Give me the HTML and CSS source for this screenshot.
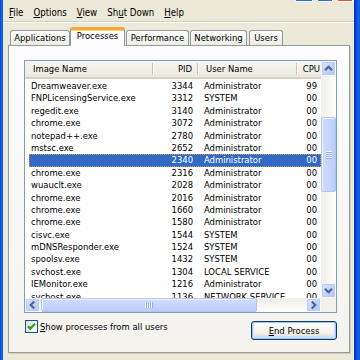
FILE: index.html
```html
<!DOCTYPE html>
<html>
<head>
<meta charset="utf-8">
<link rel="stylesheet" href="styles.css">
</head>
<body>
<div class="window">
  <div class="edge-l"></div>
  <div class="client">
    <div class="titlebar">
      <span class="tb-btn w18"></span>
      <span class="tb-btn w16"></span>
      <span class="tb-btn w16 red"></span>
    </div>
    <div class="menubar">
      <span><u>F</u>ile</span>
      <span><u>O</u>ptions</span>
      <span><u>V</u>iew</span>
      <span>Sh<u>u</u>t Down</span>
      <span><u>H</u>elp</span>
    </div>
    <div class="tabs">
      <div class="tab t-app">Applications</div>
      <div class="tab sel t-proc">Processes</div>
      <div class="tab t-perf">Performance</div>
      <div class="tab t-net">Networking</div>
      <div class="tab t-users">Users</div>
    </div>
    <div class="panel">
      <div class="listbox">
        <div class="lv-content">
          <div class="lv-head">
            <div class="hc h-name">Image Name</div>
            <div class="hc h-pid">PID</div>
            <div class="hc h-user">User Name</div>
            <div class="hc h-cpu">CPU</div>
          </div>
          <div class="lv-rows">
            <div class="row"><span class="c-name">Dreamweaver.exe</span><span class="c-pid">3344</span><span class="c-user">Administrator</span><span class="c-cpu">99</span></div>
            <div class="row"><span class="c-name">FNPLicensingService.exe</span><span class="c-pid">3312</span><span class="c-user">SYSTEM</span><span class="c-cpu">00</span></div>
            <div class="row"><span class="c-name">regedit.exe</span><span class="c-pid">3140</span><span class="c-user">Administrator</span><span class="c-cpu">00</span></div>
            <div class="row"><span class="c-name">chrome.exe</span><span class="c-pid">3072</span><span class="c-user">Administrator</span><span class="c-cpu">00</span></div>
            <div class="row"><span class="c-name">notepad++.exe</span><span class="c-pid">2780</span><span class="c-user">Administrator</span><span class="c-cpu">00</span></div>
            <div class="row"><span class="c-name">mstsc.exe</span><span class="c-pid">2652</span><span class="c-user">Administrator</span><span class="c-cpu">00</span></div>
            <div class="row selected"><span class="c-name"></span><span class="c-pid">2340</span><span class="c-user">Administrator</span><span class="c-cpu">00</span></div>
            <div class="row"><span class="c-name">chrome.exe</span><span class="c-pid">2316</span><span class="c-user">Administrator</span><span class="c-cpu">00</span></div>
            <div class="row"><span class="c-name">wuauclt.exe</span><span class="c-pid">2028</span><span class="c-user">Administrator</span><span class="c-cpu">00</span></div>
            <div class="row"><span class="c-name">chrome.exe</span><span class="c-pid">2016</span><span class="c-user">Administrator</span><span class="c-cpu">00</span></div>
            <div class="row"><span class="c-name">chrome.exe</span><span class="c-pid">1660</span><span class="c-user">Administrator</span><span class="c-cpu">00</span></div>
            <div class="row"><span class="c-name">chrome.exe</span><span class="c-pid">1580</span><span class="c-user">Administrator</span><span class="c-cpu">00</span></div>
            <div class="row"><span class="c-name">cisvc.exe</span><span class="c-pid">1544</span><span class="c-user">SYSTEM</span><span class="c-cpu">00</span></div>
            <div class="row"><span class="c-name">mDNSResponder.exe</span><span class="c-pid">1524</span><span class="c-user">SYSTEM</span><span class="c-cpu">00</span></div>
            <div class="row"><span class="c-name">spoolsv.exe</span><span class="c-pid">1432</span><span class="c-user">SYSTEM</span><span class="c-cpu">00</span></div>
            <div class="row"><span class="c-name">svchost.exe</span><span class="c-pid">1304</span><span class="c-user">LOCAL SERVICE</span><span class="c-cpu">00</span></div>
            <div class="row"><span class="c-name">IEMonitor.exe</span><span class="c-pid">1216</span><span class="c-user">Administrator</span><span class="c-cpu">00</span></div>
            <div class="row"><span class="c-name">svchost.exe</span><span class="c-pid">1136</span><span class="c-user">NETWORK SERVICE</span><span class="c-cpu">00</span></div>
          </div>
        </div>
        <div class="vscroll">
          <div class="sb-btn"><svg width="15" height="15" viewBox="0 0 15 15"><path d="M4 9.2 L7.5 5.7 L11 9.2" fill="none" stroke="#4d6185" stroke-width="2"/></svg></div>
          <div class="vthumb"><span class="vgrip"></span></div>
          <div class="sb-btn down"><svg width="15" height="15" viewBox="0 0 15 15"><path d="M4 5.8 L7.5 9.3 L11 5.8" fill="none" stroke="#4d6185" stroke-width="2"/></svg></div>
        </div>
        <div class="hscroll">
          <div class="sb-btn h"><svg width="15" height="14" viewBox="0 0 15 14"><path d="M9.2 3.5 L5.7 7 L9.2 10.5" fill="none" stroke="#4d6185" stroke-width="2"/></svg></div>
          <div class="hthumb"><span class="hgrip"></span></div>
          <div class="sb-btn h right"><svg width="15" height="14" viewBox="0 0 15 14"><path d="M5.8 3.5 L9.3 7 L5.8 10.5" fill="none" stroke="#4d6185" stroke-width="2"/></svg></div>
        </div>
        <div class="corner"></div>
      </div>
      <div class="footer">
        <label class="check">
          <span class="box"><svg width="11" height="11" viewBox="0 0 11 11"><path d="M2 5.2 L4.3 7.6 L9 2.8" fill="none" stroke="#21a121" stroke-width="2.2"/></svg></span>
          <span><u>S</u>how processes from all users</span>
        </label>
        <div class="button"><u>E</u>nd Process</div>
      </div>
    </div>
  </div>
  <div class="edge-r"></div>
</div>
</body>
</html>
```

FILE: styles.css
```css
html, body {
  margin: 0;
  padding: 0;
}
body {
  width: 360px;
  height: 360px;
  overflow: hidden;
  background: #ece9d8;
  font-family: "DejaVu Sans Condensed", "DejaVu Sans", sans-serif;
  font-stretch: condensed;
  font-size: 9.4px;
  color: #000;
}
.window {
  display: flex;
  height: 360px;
}
.edge-l {
  width: 3px;
  background: linear-gradient(90deg, #0a3fcf, #1b6af0 60%, #0c4fe2);
}
.edge-r {
  width: 6px;
  background: linear-gradient(90deg, #0a2fb8, #0c48db 40%, #1666ee 80%, #0d4fe0);
}
.client {
  flex: 1;
  display: flex;
  flex-direction: column;
}
.titlebar {
  height: 2px;
  display: flex;
  justify-content: flex-end;
  gap: 4px;
  padding-right: 1px;
}
.tb-btn {
  height: 2px;
  box-sizing: border-box;
  border: 1px solid #fff;
  border-top: 0;
  border-radius: 0 0 3px 3px;
  background: #2d6be3;
}
.tb-btn.w18 { width: 18px; }
.tb-btn.w16 { width: 16px; }
.tb-btn.red { background: #d95a33; }

.menubar {
  height: 20px;
  box-sizing: border-box;
  padding: 3px 0 0 6px;
  display: flex;
  gap: 10px;
  font-size: 9.6px;
  line-height: 16px;
  border-bottom: 1px solid #d3d0c2;
  box-shadow: 0 1px 0 #fff;
}
.menubar u, .check u, .button u { text-decoration-thickness: 1px; text-underline-offset: 1px; }

.tabs {
  margin: 5px 0 0 7px;
  height: 18px;
  display: flex;
  align-items: flex-end;
}
.tab {
  height: 15px;
  box-sizing: border-box;
  border: 1px solid #919b9c;
  border-bottom: 0;
  border-radius: 3px 3px 0 0;
  background: linear-gradient(#fefefe, #ecebe4);
  text-align: center;
  line-height: 14px;
  white-space: nowrap;
}
.tab.sel {
  height: 19px;
  margin-bottom: -1px;
  position: relative;
  z-index: 1;
  border-top: 3px solid #f0a83c;
  box-shadow: inset 0 1px 0 #ffd56a;
  background: #fcfcfe;
  line-height: 11px;
  padding-bottom: 5px;
}
.t-app { width: 60px; }
.t-proc { width: 55px; }
.t-perf { width: 63px; margin-left: 1px; }
.t-net { width: 57px; margin-left: 1px; }
.t-users { width: 34px; margin-left: 2px; }

.panel {
  margin-left: 5px;
  width: 342px;
  box-sizing: border-box;
  border: 1px solid #919b9c;
  box-shadow: 1px 1px 0 #d2cfc2;
  background: linear-gradient(#fcfcfe, #f4f3ee);
  padding: 14px 12px 12px 15px;
}

.listbox {
  width: 313px;
  height: 253px;
  box-sizing: border-box;
  border: 1px solid #7f9db9;
  background: #fff;
  display: grid;
  grid-template-columns: 296px 15px;
  grid-template-rows: 237px 14px;
}
.lv-content {
  overflow: hidden;
}
.lv-head {
  height: 18px;
  box-sizing: border-box;
  display: grid;
  grid-template-columns: 128px 45px 99px 24px;
  align-items: center;
  background: linear-gradient(#f7f6f0, #ebe9df);
  border-bottom: 2px solid #d6d2c2;
}
.hc {
  height: 12px;
  line-height: 12px;
  box-sizing: border-box;
  border-right: 1px solid #c7c5b2;
  box-shadow: 1px 0 0 #fff;
  white-space: nowrap;
}
.h-name { padding-left: 8px; }
.h-pid { text-align: right; padding-right: 5px; }
.h-user { padding-left: 8px; }
.h-cpu { text-align: right; padding-right: 1px; border-right: 0; box-shadow: none; }

.lv-rows {
  padding-top: 1px;
}
.row {
  margin-left: 4px;
  height: 12.4px;
  line-height: 12.4px;
  box-sizing: border-box;
  display: grid;
  grid-template-columns: 124px 45px 99px 20px;
  white-space: nowrap;
}
.row span { overflow: hidden; }
.c-name { padding-left: 2px; }
.c-pid { text-align: right; padding-right: 5px; }
.c-user { padding-left: 6px; }
.c-cpu { text-align: right; }
.row.selected {
  background: #316ac5;
  color: #fff;
  outline: 1px dotted #ce953a;
  outline-offset: -1px;
}

.vscroll {
  display: flex;
  flex-direction: column;
  background: linear-gradient(90deg, #efeee7, #fdfdfa);
}
.sb-btn {
  width: 15px;
  height: 15px;
  box-sizing: border-box;
  border: 1px solid #f4f7ff;
  border-radius: 2px;
  background: linear-gradient(135deg, #dbe5fe, #bdd0fa 60%, #b0c6f6);
  box-shadow: inset 0 0 0 1px #bccdf5;
  display: flex;
}
.sb-btn svg { display: block; margin: -1px; }
.sb-btn.down { margin-top: auto; }
.sb-btn.h { height: 14px; }
.sb-btn.right { margin-left: auto; }
.vthumb {
  margin-top: 41px;
  height: 75px;
  box-sizing: border-box;
  border: 1px solid #b3c6f2;
  border-radius: 2px;
  background: linear-gradient(90deg, #cfdcfd, #c4d4fc 60%, #b9cbf8);
  box-shadow: inset 1px 1px 0 #eef3ff;
  display: flex;
  align-items: center;
  justify-content: center;
}
.vgrip {
  width: 6px;
  height: 8px;
  background: repeating-linear-gradient(#eef4ff 0 1px, #8caff3 1px 2px);
}
.hscroll {
  display: flex;
  background: linear-gradient(#efeee7, #fdfdfa);
}
.hthumb {
  margin-left: 1px;
  width: 216px;
  height: 14px;
  box-sizing: border-box;
  border: 1px solid #b3c6f2;
  border-radius: 2px;
  background: linear-gradient(#cfdcfd, #c4d4fc 60%, #b9cbf8);
  box-shadow: inset 1px 1px 0 #eef3ff;
  display: flex;
  align-items: center;
  justify-content: center;
}
.hgrip {
  width: 8px;
  height: 6px;
  background: repeating-linear-gradient(90deg, #eef4ff 0 1px, #8caff3 1px 2px);
}
.corner {
  background: #f3f1ea;
}

.footer {
  margin-top: 7px;
  height: 20px;
  display: flex;
  justify-content: space-between;
  align-items: flex-start;
}
.check {
  margin-left: 1px;
  height: 13px;
  display: flex;
  align-items: center;
  gap: 2px;
  white-space: nowrap;
}
.box {
  width: 13px;
  height: 13px;
  box-sizing: border-box;
  border: 1px solid #1c5180;
  background: linear-gradient(135deg, #dcdbd3, #f7f7f4 70%, #fff);
  display: flex;
  align-items: center;
  justify-content: center;
}
.box svg { display: block; }
.button {
  margin-top: 1px;
  width: 86px;
  height: 19px;
  box-sizing: border-box;
  border: 1px solid #003c74;
  border-radius: 3px;
  background: linear-gradient(#ffffff, #f3f2ed 60%, #dcd8cd);
  box-shadow: inset 0 0 0 1px #a9c4ef, inset 0 -1px 0 2px #cee0fb;
  text-align: center;
  line-height: 17px;
  white-space: nowrap;
}
```
